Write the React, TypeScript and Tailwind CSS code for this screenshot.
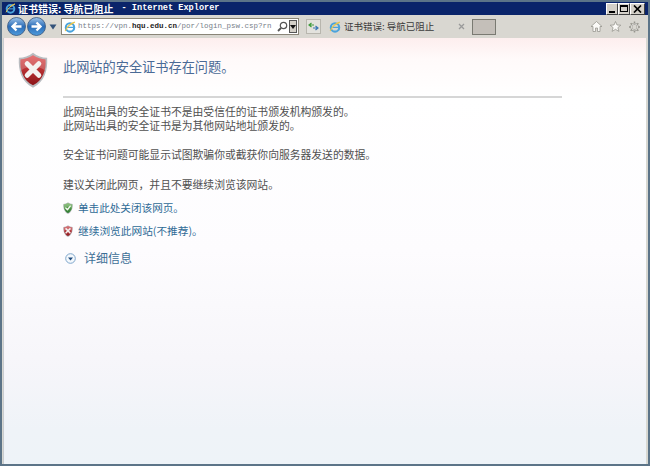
import React from 'react';

const cjk = "font-['Noto_Sans_CJK_SC','Noto_Sans',sans-serif]";

const Shield: React.FC<{ size: number; from: string; to: string; mark: 'x' | 'check' }> = ({ size, from, to, mark }) => {
  const id = `sh-${mark}-${size}`;
  return (
    <svg width={size} height={size * 1.22} viewBox="0 0 36 44" className="shrink-0">
      <defs>
        <linearGradient id={id} x1="0" y1="0" x2="0" y2="1">
          <stop offset="0" stopColor={from} />
          <stop offset="1" stopColor={to} />
        </linearGradient>
      </defs>
      <path d="M18 1 C23 5 29 7 35 7 C36 22 32 36 18 43 C4 36 0 22 1 7 C7 7 13 5 18 1Z" fill="#b9bcc0" />
      <path d="M18 4 C23 7 28 9 33 9 C34 22 30 34 18 40 C6 34 2 22 3 9 C8 9 13 7 18 4Z" fill={`url(#${id})`} />
      <path d="M18 4 C23 7 28 9 33 9 C33.5 14 33 18 32 22 C24 16 12 16 4 22 C3 18 2.500 14 3 9 C8 9 13 7 18 4Z" fill="#ffffff" opacity="0.22" />
      {mark === 'x' ? (
        <path d="M11 14 L25 28 M25 14 L11 28" stroke="#f4f1f0" strokeWidth="6" strokeLinecap="round" />
      ) : (
        <path d="M10 22 L16 28 L26 15" stroke="#f4f8f0" strokeWidth="5" fill="none" strokeLinecap="round" strokeLinejoin="round" />
      )}
    </svg>
  );
};

const IeLogo: React.FC<{ size: number }> = ({ size }) => (
  <svg width={size} height={size} viewBox="0 0 16 16" className="shrink-0">
    <circle cx="8" cy="8.500" r="5.600" fill="none" stroke="#4aa3dc" strokeWidth="2.800" />
    <path d="M3 8.500 H13" stroke="#4aa3dc" strokeWidth="1.600" />
    <path d="M1.500 13.500 C4 8 9 3 14.500 1.500 C12 3 9 4 7 6" fill="none" stroke="#e8c44a" strokeWidth="1.400" />
  </svg>
);

const NavButton: React.FC<{ dir: 'left' | 'right' }> = ({ dir }) => (
  <svg width="19" height="19" viewBox="0 0 19 19" className="shrink-0">
    <defs>
      <linearGradient id={`nav-${dir}`} x1="0" y1="0" x2="0" y2="1">
        <stop offset="0" stopColor="#9ec4ea" />
        <stop offset="0.5" stopColor="#2c6db8" />
        <stop offset="1" stopColor="#4f9bdc" />
      </linearGradient>
    </defs>
    <circle cx="9.500" cy="9.500" r="9" fill={`url(#nav-${dir})`} stroke="#33547c" strokeWidth="0.800" />
    {dir === 'left' ? (
      <path d="M14.500 9.500 H6 M9.500 5.500 L5.500 9.500 L9.500 13.500" stroke="#fff" strokeWidth="2.400" fill="none" />
    ) : (
      <path d="M4.500 9.500 H13 M9.500 5.500 L13.500 9.500 L9.500 13.500" stroke="#fff" strokeWidth="2.400" fill="none" />
    )}
  </svg>
);

const WinButton: React.FC<{ children: React.ReactNode; wide?: boolean }> = ({ children, wide }) => (
  <div className={`${wide ? 'w-[15px]' : 'w-[12px]'} h-[12px] bg-[#d4d0c8] border-t border-l border-white border-r border-b border-r-[#404040] border-b-[#404040] flex items-center justify-center`}>
    {children}
  </div>
);

const App: React.FC = () => {
  return (
    <div className={`w-[650px] h-[466px] overflow-hidden flex flex-col bg-[#d8d8d2] border-[2px] border-[#5c7488] ${cjk}`}>
      {/* title bar */}
      <div className="h-[13px] bg-[#0a246a] flex items-center pl-[3px] pr-[3px] shrink-0">
        <IeLogo size={11} />
        <span className="ml-[2px] text-[10px] leading-[13px] font-bold text-white whitespace-nowrap">证书错误: 导航已阻止</span>
        <span className="ml-[8px] font-['Liberation_Mono',monospace] text-[8.6px] leading-[13px] font-bold text-white whitespace-nowrap">- Internet Explorer</span>
        <div className="ml-auto flex gap-0">
          <WinButton><div className="w-[6px] h-[2px] bg-black mt-[6px]" /></WinButton>
          <WinButton><div className="w-[8px] h-[7px] border border-black border-t-2" /></WinButton>
          <WinButton wide>
            <svg width="9" height="8" viewBox="0 0 9 8"><path d="M1 0.500 L8 7.500 M8 0.500 L1 7.500" stroke="#000" strokeWidth="1.700" /></svg>
          </WinButton>
        </div>
      </div>

      {/* toolbar */}
      <div className="h-[23px] bg-[#d9d7d1] flex items-center pl-[5px] shrink-0">
        <NavButton dir="left" />
        <div className="w-[1px]" />
        <NavButton dir="right" />
        <svg width="8" height="6" viewBox="0 0 8 6" className="ml-[3px] shrink-0"><path d="M0.500 0.500 H7.500 L4 5.500Z" fill="#33527a" /></svg>
        {/* address box */}
        <div className="ml-[4px] w-[238px] h-[17px] bg-white border border-[#8a8578] flex items-center pl-[2px] pr-[1px] shrink-0">
          <IeLogo size={12} />
          <div className="ml-[2px] w-[199px] font-['Liberation_Mono',monospace] text-[7.5px] leading-[15px] whitespace-nowrap text-[#77808a]">
            https://vpn.<b className="text-[#222]">hqu.edu.cn</b>/por/login_psw.csp?rn
          </div>
          <svg width="11" height="11" viewBox="0 0 11 11" className="shrink-0">
            <circle cx="6.500" cy="4.500" r="3.200" fill="none" stroke="#555" strokeWidth="1.200" />
            <path d="M4 7 L1 10" stroke="#555" strokeWidth="1.800" />
          </svg>
          <div className="ml-auto w-[8px] h-[13px] bg-[#d4d0c8] border border-[#555] flex items-center justify-center">
            <svg width="6" height="4" viewBox="0 0 6 4"><path d="M0 0 H6 L3 4Z" fill="#111" /></svg>
          </div>
        </div>
        {/* refresh */}
        <div className="ml-[7px] w-[15px] h-[15px] bg-[#e3e2dd] border border-[#b8b6ae] flex items-center justify-center shrink-0">
          <svg width="11" height="9" viewBox="0 0 11 9">
            <path d="M1 3 H6 M3.500 1 L1 3 L3.500 5" stroke="#3f9a3c" strokeWidth="1.200" fill="none" />
            <path d="M10 6 H5 M7.500 4 L10 6 L7.500 8" stroke="#3b78b5" strokeWidth="1.200" fill="none" />
          </svg>
        </div>
        {/* tab */}
        <div className="ml-[5px] w-[142px] h-[17px] flex items-center pl-[3px] pr-[3px] shrink-0 text-[#3a3a3a]">
          <IeLogo size={12} />
          <span className="ml-[3px] text-[9.500px] leading-[17px] whitespace-nowrap">证书错误: 导航已阻止</span>
          <svg width="7" height="7" viewBox="0 0 7 7" className="ml-auto"><path d="M1 1 L6 6 M6 1 L1 6" stroke="#9a9a9a" strokeWidth="1.300" /></svg>
        </div>
        <div className="ml-[4px] w-[24px] h-[16px] bg-[#c4bfb9] border border-[#7a7a72] shrink-0" />
        {/* home, star, gear */}
        <div className="ml-auto mr-[8px] flex items-center gap-[8px]">
          <svg width="11" height="11" viewBox="0 0 11 11"><path d="M5.500 0.500 L11 5.500 H9 V10.500 H6.500 V7 H4.500 V10.500 H2 V5.500 H0 Z" fill="#fbfaf7" stroke="#8f8e87" strokeWidth="0.700" /></svg>
          <svg width="11" height="11" viewBox="0 0 11 11"><path d="M5.500 0.500 L7 4 L10.800 4.200 L7.900 6.600 L8.900 10.400 L5.500 8.300 L2.100 10.400 L3.100 6.600 L0.200 4.200 L4 4Z" fill="#fbfaf7" stroke="#8f8e87" strokeWidth="0.700" /></svg>
          <svg width="11" height="12" viewBox="0 0 12 12">
            <circle cx="6" cy="6" r="3.500" fill="none" stroke="#96958e" strokeWidth="2" />
            <circle cx="6" cy="6" r="3.500" fill="none" stroke="#f7f6f2" strokeWidth="0.800" />
            <path d="M6 0 V2 M6 10 V12 M0 6 H2 M10 6 H12 M1.800 1.800 L3.200 3.200 M8.800 8.800 L10.200 10.200 M1.800 10.200 L3.200 8.800 M8.800 3.200 L10.200 1.800" stroke="#96958e" strokeWidth="1.600" />
          </svg>
        </div>
      </div>

      {/* page */}
      <div className="flex-1 ml-[1px] mr-[2px] bg-[linear-gradient(180deg,#fdeeee_0%,#fffafa_5%,#ffffff_14%,#fdfcfe_50%,#f7f6fa_75%,#eff3f8_92%,#eef3f8_100%)] border-l border-[#c9ccd0] flex pl-[14px] pt-[14px]">
        <div className="w-[45px] shrink-0">
          <Shield size={30} from="#e04a4c" to="#8c1417" mark="x" />
        </div>
        <div className="w-[499px]">
          <h1 className="text-[13.200px] leading-[20px] font-normal text-[#4a6a96] mt-[5px] whitespace-nowrap">此网站的安全证书存在问题。</h1>
          <div className="h-[2px] bg-[#d6d6d6] mt-[19px]" />
          <div className="mt-[6px] text-[10.800px] leading-[14px] text-[#505050]">
            <p className="whitespace-nowrap">此网站出具的安全证书不是由受信任的证书颁发机构颁发的。</p>
            <p className="whitespace-nowrap">此网站出具的安全证书是为其他网站地址颁发的。</p>
            <p className="mt-[15px] whitespace-nowrap">安全证书问题可能显示试图欺骗你或截获你向服务器发送的数据。</p>
            <p className="mt-[16px] whitespace-nowrap">建议关闭此网页，并且不要继续浏览该网站。</p>
          </div>
          <div className="mt-[9px] flex items-center h-[16px] text-[10.600px] text-[#2f6b96] whitespace-nowrap">
            <Shield size={10} from="#6fb05a" to="#2b7a2f" mark="check" />
            <span className="ml-[5px]">单击此处关闭该网页。</span>
          </div>
          <div className="mt-[7px] flex items-center h-[16px] text-[10.700px] text-[#2f6b96] whitespace-nowrap">
            <Shield size={10} from="#cf4a50" to="#8f1c22" mark="x" />
            <span className="ml-[5px]">继续浏览此网站(不推荐)。</span>
          </div>
          <div className="mt-[10px] ml-[2px] flex items-center h-[18px] text-[12px] text-[#3d6f96] whitespace-nowrap">
            <svg width="11" height="11" viewBox="0 0 11 11" className="shrink-0">
              <circle cx="5.500" cy="5.500" r="4.800" fill="#f4f8fc" stroke="#7ea6cc" />
              <path d="M3 4.500 H8 L5.500 7.500Z" fill="#1f4a7c" />
            </svg>
            <span className="ml-[8px]">详细信息</span>
          </div>
        </div>
      </div>
    </div>
  );
};

export default App;
